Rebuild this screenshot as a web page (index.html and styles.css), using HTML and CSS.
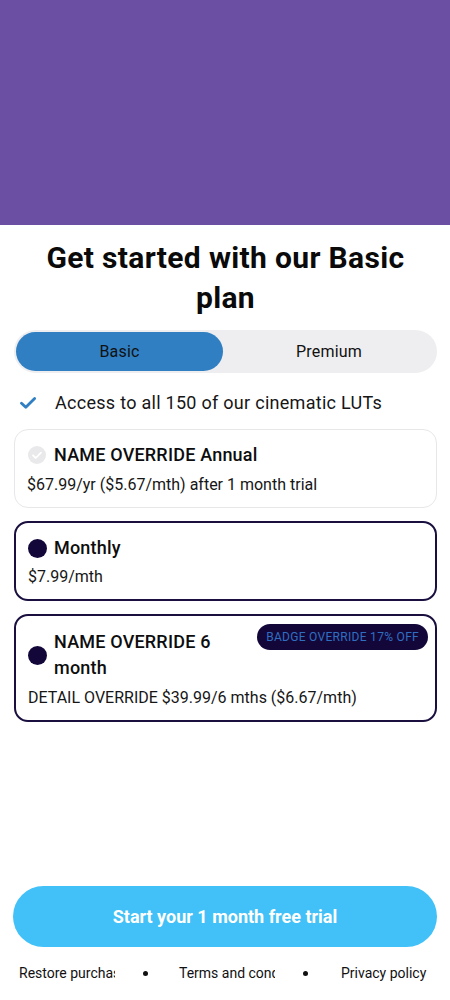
FILE: index.html
```html
<!DOCTYPE html>
<html lang="en">
<head>
<meta charset="utf-8">
<meta name="viewport" content="width=device-width, initial-scale=1">
<title>Paywall</title>
<link rel="stylesheet" href="styles.css">
</head>
<body>
<div class="page">
  <div class="hero"></div>
  <div class="content">
    <h1 class="title">Get started with our Basic plan</h1>
    <div class="toggle">
      <div class="seg seg-active">Basic</div>
      <div class="seg">Premium</div>
    </div>
    <div class="feature">
      <svg class="feature-check" viewBox="0 0 16 12" width="16" height="12">
        <path d="M1.5 6.2 L5.8 10.3 L14.6 1.6" fill="none" stroke="#2f7fc2" stroke-width="2.8" stroke-linecap="round" stroke-linejoin="round"/>
      </svg>
      <span class="feature-text">Access to all 150 of our cinematic LUTs</span>
    </div>
    <div class="plans">
      <div class="plan plan-light">
        <div class="plan-head">
          <svg class="plan-icon" viewBox="0 0 18 18" width="18" height="18">
            <circle cx="9" cy="9" r="9" fill="#e9e9eb"/>
            <path d="M5 9.3 L7.8 12 L13 6.6" fill="none" stroke="#ffffff" stroke-width="1.8" stroke-linecap="round" stroke-linejoin="round"/>
          </svg>
          <span class="plan-name">NAME OVERRIDE Annual</span>
        </div>
        <div class="plan-detail">$67.99/yr ($5.67/mth) after 1 month trial</div>
      </div>
      <div class="plan plan-dark">
        <div class="plan-head">
          <span class="plan-dot"></span>
          <span class="plan-name">Monthly</span>
        </div>
        <div class="plan-detail">$7.99/mth</div>
      </div>
      <div class="plan plan-dark">
        <div class="plan-head">
          <span class="plan-dot"></span>
          <span class="plan-name plan-name-wrap">NAME OVERRIDE 6 month</span>
          <span class="badge">BADGE OVERRIDE 17% OFF</span>
        </div>
        <div class="plan-detail">DETAIL OVERRIDE $39.99/6 mths ($6.67/mth)</div>
      </div>
    </div>
  </div>
  <div class="bottom">
    <button class="cta" type="button">Start your 1 month free trial</button>
    <div class="footer">
      <span class="foot-link">Restore purchases</span>
      <span class="foot-dot"></span>
      <span class="foot-link">Terms and conditions</span>
      <span class="foot-dot"></span>
      <span class="foot-link foot-last">Privacy policy</span>
    </div>
  </div>
</div>
</body>
</html>
```

FILE: styles.css
```css
* { box-sizing: border-box; }
html, body { margin: 0; padding: 0; }
body {
  font-family: Roboto, "Noto Sans", "Liberation Sans", sans-serif;
  color: #111111;
  background: #ffffff;
}
.page {
  display: flex;
  flex-direction: column;
  min-height: 1000px;
}
.hero {
  height: 225px;
  background: #6a4fa3;
}
.content {
  padding: 0 13px 0 14px;
}
.title {
  margin: 13px 16px 0;
  font-size: 30px;
  line-height: 40px;
  font-weight: 700;
  letter-spacing: 0.35px;
  text-align: center;
  color: #0a0a0a;
}
.toggle {
  margin-top: 12px;
  display: flex;
  height: 43px;
  padding: 2px;
  border-radius: 22px;
  background: #eeeef0;
}
.seg {
  flex: 1;
  display: flex;
  align-items: center;
  justify-content: center;
  border-radius: 20px;
  font-size: 16px;
  letter-spacing: 0.2px;
  color: #111111;
}
.seg-active {
  flex: 0 0 207px;
  background: #2f7fc2;
}
.feature {
  margin-top: 18px;
  display: flex;
  align-items: center;
  height: 24px;
}
.feature-check {
  margin-left: 6px;
  flex: none;
}
.feature-text {
  margin-left: 19px;
  font-size: 18px;
  line-height: 24px;
  letter-spacing: 0.28px;
  color: #161616;
}
.plans {
  margin-top: 14px;
  display: flex;
  flex-direction: column;
  gap: 13px;
}
.plan {
  border-radius: 14px;
  display: flex;
  flex-direction: column;
}
.plan-light {
  border: 1.5px solid #e7e7e9;
  padding: 13px 13px 12px 12px;
  gap: 7px;
}
.plan-dark {
  border: 2px solid #1a0f3f;
  padding: 13px 13px 12px 12px;
  gap: 6px;
}
.plan-head {
  display: flex;
  align-items: center;
}
.plan-icon {
  flex: none;
  margin-left: 1px;
  margin-right: 8px;
}
.plan-dot {
  flex: none;
  width: 19px;
  height: 19px;
  border-radius: 50%;
  background: #13073a;
  margin-right: 7px;
}
.plan-name {
  font-size: 18px;
  line-height: 24px;
  font-weight: 500;
  color: #0d0d0d;
  letter-spacing: 0.2px;
}
.plan-name-wrap {
  flex: 1;
  line-height: 26px;
  margin-top: 0;
}
.badge {
  align-self: flex-start;
  flex: none;
  margin-top: -5px;
  margin-right: -6px;
  padding: 0 9px;
  height: 26px;
  line-height: 26px;
  border-radius: 13px;
  background: #13073a;
  color: #2f6fc0;
  font-size: 12px;
  letter-spacing: 0.3px;
}
.plan-detail {
  font-size: 16px;
  line-height: 21px;
  color: #161616;
}
.bottom {
  margin-top: auto;
  padding: 0 13px 17px;
}
.cta {
  display: block;
  width: 100%;
  height: 61px;
  border: none;
  border-radius: 31px;
  background: #41c1f8;
  color: #ffffff;
  font-family: inherit;
  font-size: 18px;
  font-weight: 700;
}
.footer {
  margin-top: 16px;
  display: flex;
  align-items: center;
  padding-left: 6px;
  height: 20px;
}
.foot-link {
  width: 96px;
  flex: none;
  overflow: hidden;
  white-space: nowrap;
  font-size: 14px;
  line-height: 20px;
  color: #111111;
}
.foot-last {
  margin-left: 2px;
}
.foot-dot {
  flex: none;
  width: 5px;
  height: 5px;
  border-radius: 50%;
  background: #111111;
  margin: 0 31px 0 28px;
}
```
